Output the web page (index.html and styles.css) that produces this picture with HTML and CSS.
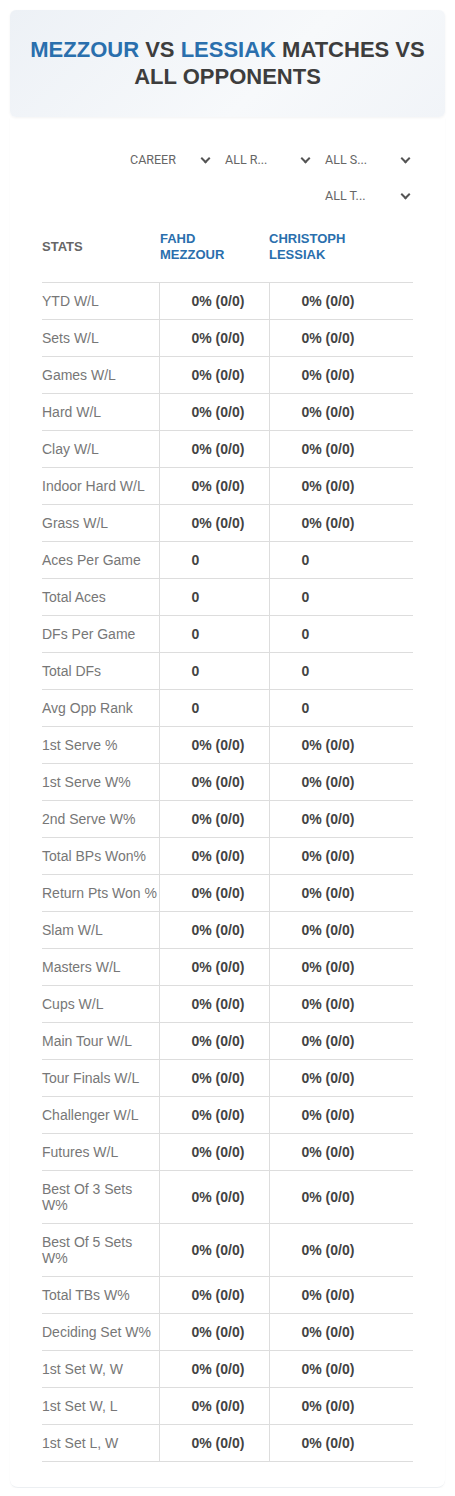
FILE: index.html
```html
<!DOCTYPE html>
<html>
    <head>
        <title>Mezzour vs Lessiak</title>
        <link rel="stylesheet" href="styles.css">
    </head>
    <body>
        <div class="wrap">
            <div class="hero">
                <h1><span class="blue">Mezzour</span> vs <span class="blue">Lessiak</span> matches vs all opponents</h1>
            </div>

            <div class="card">
                <div class="filters">
                    <div class="select first">CAREER <b></b></div>
                    <div class="select">ALL R... <b></b></div>
                    <div class="select">ALL S... <b></b></div>
                    <div class="select">ALL T... <b></b></div>
                </div>

                <table class="stats">
                    <thead>
                        <tr>
                            <th class="label">STATS</th>
                            <th class="player p1">FAHD<br>MEZZOUR</th>
                            <th class="player">CHRISTOPH<br>LESSIAK</th>
                        </tr>
                    </thead>
                    <tbody>
                        <tr><td>YTD W/L</td><td>0% (0/0)</td><td>0% (0/0)</td></tr>
                        <tr><td>Sets W/L</td><td>0% (0/0)</td><td>0% (0/0)</td></tr>
                        <tr><td>Games W/L</td><td>0% (0/0)</td><td>0% (0/0)</td></tr>
                        <tr><td>Hard W/L</td><td>0% (0/0)</td><td>0% (0/0)</td></tr>
                        <tr><td>Clay W/L</td><td>0% (0/0)</td><td>0% (0/0)</td></tr>
                        <tr><td>Indoor Hard W/L</td><td>0% (0/0)</td><td>0% (0/0)</td></tr>
                        <tr><td>Grass W/L</td><td>0% (0/0)</td><td>0% (0/0)</td></tr>
                        <tr><td>Aces Per Game</td><td>0</td><td>0</td></tr>
                        <tr><td>Total Aces</td><td>0</td><td>0</td></tr>
                        <tr><td>DFs Per Game</td><td>0</td><td>0</td></tr>
                        <tr><td>Total DFs</td><td>0</td><td>0</td></tr>
                        <tr><td>Avg Opp Rank</td><td>0</td><td>0</td></tr>
                        <tr><td>1st Serve %</td><td>0% (0/0)</td><td>0% (0/0)</td></tr>
                        <tr><td>1st Serve W%</td><td>0% (0/0)</td><td>0% (0/0)</td></tr>
                        <tr><td>2nd Serve W%</td><td>0% (0/0)</td><td>0% (0/0)</td></tr>
                        <tr><td>Total BPs Won%</td><td>0% (0/0)</td><td>0% (0/0)</td></tr>
                        <tr><td>Return Pts Won %</td><td>0% (0/0)</td><td>0% (0/0)</td></tr>
                        <tr><td>Slam W/L</td><td>0% (0/0)</td><td>0% (0/0)</td></tr>
                        <tr><td>Masters W/L</td><td>0% (0/0)</td><td>0% (0/0)</td></tr>
                        <tr><td>Cups W/L</td><td>0% (0/0)</td><td>0% (0/0)</td></tr>
                        <tr><td>Main Tour W/L</td><td>0% (0/0)</td><td>0% (0/0)</td></tr>
                        <tr><td>Tour Finals W/L</td><td>0% (0/0)</td><td>0% (0/0)</td></tr>
                        <tr><td>Challenger W/L</td><td>0% (0/0)</td><td>0% (0/0)</td></tr>
                        <tr><td>Futures W/L</td><td>0% (0/0)</td><td>0% (0/0)</td></tr>
                        <tr><td>Best Of 3 Sets W%</td><td>0% (0/0)</td><td>0% (0/0)</td></tr>
                        <tr><td>Best Of 5 Sets W%</td><td>0% (0/0)</td><td>0% (0/0)</td></tr>
                        <tr><td>Total TBs W%</td><td>0% (0/0)</td><td>0% (0/0)</td></tr>
                        <tr><td>Deciding Set W%</td><td>0% (0/0)</td><td>0% (0/0)</td></tr>
                        <tr><td>1st Set W, W</td><td>0% (0/0)</td><td>0% (0/0)</td></tr>
                        <tr><td>1st Set W, L</td><td>0% (0/0)</td><td>0% (0/0)</td></tr>
                        <tr><td>1st Set L, W</td><td>0% (0/0)</td><td>0% (0/0)</td></tr>
                    </tbody>
                </table>
            </div>
        </div>
    </body>
</html>
```

FILE: styles.css
```css
body {
    margin: 0;
    font-family: "Liberation Sans", Arial, sans-serif;
    background: #fff;
}
    .wrap {
        padding: 10px 10px 0;
    }
    .hero {
        height: 107px;
        box-sizing: border-box;
        padding: 26px 10px;
        border-radius: 6px;
        background: linear-gradient(135deg, #edf1f6 0%, #f7f9fb 60%, #f1f4f8 100%);
        box-shadow: 0 1px 3px rgba(0,0,0,0.05);
    }
    .hero h1 {
        margin: 0;
        font-size: 22px;
        line-height: 27px;
        text-align: center;
        text-transform: uppercase;
        color: #3d3d3d;
    }
    .hero .blue {
        color: #2a6fad;
    }
    .card {
        padding: 25px 32px 25px;
        border-radius: 0 0 8px 8px;
        border-bottom: 1px solid #eceff2;
        box-shadow: 0 1px 2px rgba(0,0,0,0.03);
    }
    .filters {
        display: flex;
        flex-wrap: wrap;
        justify-content: flex-end;
    }
    .select {
        position: relative;
        width: 100px;
        height: 36px;
        box-sizing: border-box;
        padding: 0 0 0 12px;
        line-height: 36px;
        font-family: Roboto, sans-serif;
        font-size: 12.5px;
        color: #666;
    }
    .select.first {
        padding-left: 17px;
    }
    .select b {
        position: absolute;
        right: 4px;
        top: 13px;
        width: 5px;
        height: 5px;
        border-right: 2px solid #555;
        border-bottom: 2px solid #555;
        transform: rotate(45deg);
    }
    .stats {
        width: 100%;
        border-collapse: collapse;
        table-layout: fixed;
    }
    .stats th {
        height: 66px;
        padding: 0 0 2px;
        text-align: left;
        vertical-align: middle;
        font-size: 13px;
        line-height: 16px;
        border-bottom: 1px solid #ddd;
    }
    .stats th.label {
        width: 117px;
        color: #666;
    }
    .stats th.player {
        color: #2a6fad;
    }
    .stats th.p1 {
        width: 109px;
        padding-left: 1px;
    }
    .stats td {
        padding: 10px 0;
        font-size: 14px;
        line-height: 16px;
        border-bottom: 1px solid #ddd;
        vertical-align: middle;
    }
    .stats td:first-child {
        color: #777;
    }
    .stats td + td {
        border-left: 1px solid #ddd;
        padding-left: 32px;
        font-weight: bold;
        color: #444;
    }
```
